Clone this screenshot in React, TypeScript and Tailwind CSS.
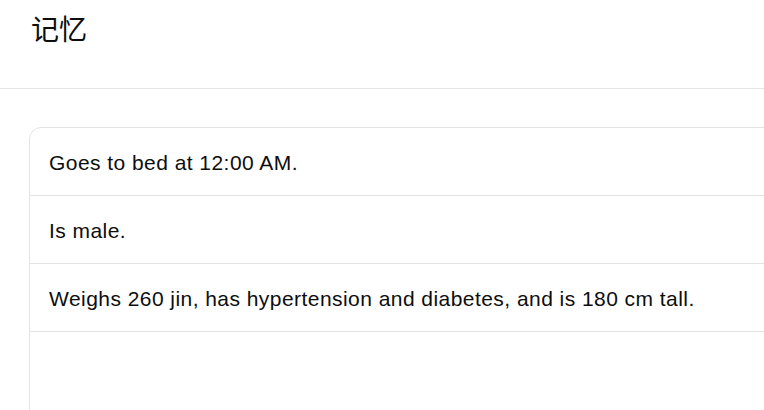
const memories = [
  'Goes to bed at 12:00 AM.',
  'Is male.',
  'Weighs 260 jin, has hypertension and diabetes, and is 180 cm tall.',
];

const App = () => {
  return (
    <div
      className="w-[764px] h-[410px] overflow-hidden bg-white text-[#0d0d0d]"
      style={{ fontFamily: '"Liberation Sans", "Noto Sans CJK SC", sans-serif' }}
    >
      <header className="h-[89px] border-b border-[#e5e5e5] flex items-start pt-[13px] pl-[31px]">
        <h1 className="text-[28px] leading-[36px] font-normal">记忆</h1>
      </header>
      <main className="pt-[38px] pl-[29px]">
        <div className="w-[800px] h-[320px] border border-[#e3e3e3] rounded-tl-[12px] rounded-tr-[12px]">
          {memories.map((m) => (
            <div key={m} className="h-[68px] flex items-center pl-[19px] pt-[2px] border-b border-[#e3e3e3] text-[21px] tracking-[0.45px]">
              {m}
            </div>
          ))}
        </div>
      </main>
    </div>
  );
};

export default App;
